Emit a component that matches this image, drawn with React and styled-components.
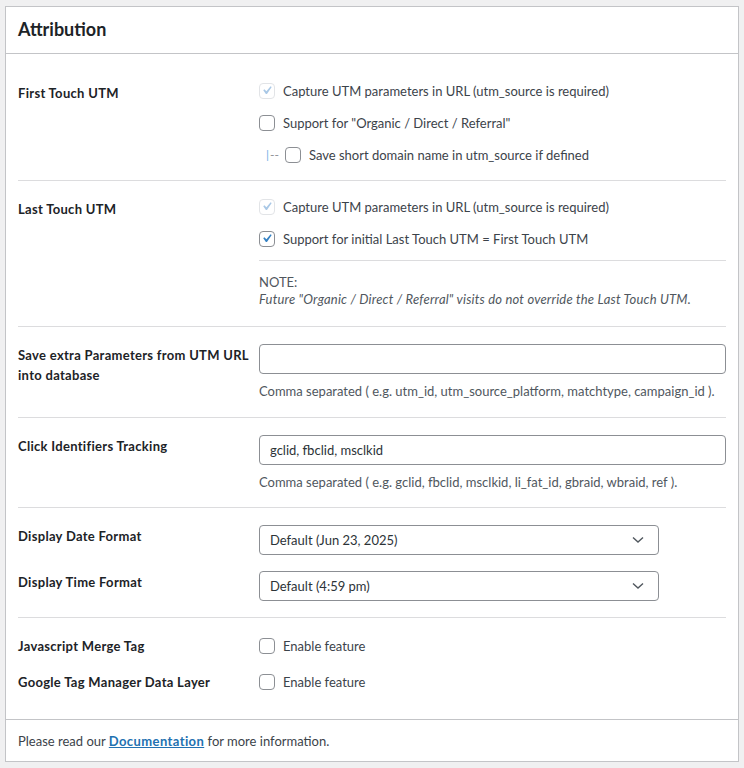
import React from "react";
import styled, { createGlobalStyle } from "styled-components";

const GlobalStyle = createGlobalStyle`
  html, body {
    margin: 0;
    padding: 0;
    background: #f0f0f1;
  }
  body {
    padding: 6px 5px 0;
    font-family: "Lato", "Noto Sans", sans-serif;
    font-size: 13px;
    color: #3c434a;
  }
`;

const Panel = styled.div`
  background: #fff;
  border: 1px solid #c3c4c7;
`;

const Header = styled.div`
  padding: 10px 12px 12px;
  border-bottom: 1px solid #c3c4c7;
`;

const Title = styled.h2`
  margin: 0;
  font-size: 18px;
  line-height: 24px;
  font-weight: 700;
  color: #1d2327;
`;

const Body = styled.div`
  padding: 0 12px;
`;

const Section = styled.div`
  display: flex;
  flex-direction: column;
  gap: ${(p) => p.$gap || 0}px;
  padding: ${(p) => p.$top}px 0 ${(p) => p.$bottom}px;
  border-bottom: ${(p) => (p.$last ? "none" : "1px solid #dcdcde")};
`;

const Field = styled.div`
  display: grid;
  grid-template-columns: 241px 1fr;
  align-items: start;
`;

const Label = styled.div`
  padding-right: 8px;
  margin-top: ${(p) => p.$offset || 0}px;
  font-weight: 700;
  font-size: 13px;
  line-height: 20px;
  letter-spacing: 0.3px;
  color: #1d2327;
`;

const Control = styled.div`
  display: flex;
  flex-direction: column;
  gap: ${(p) => p.$gap || 0}px;
`;

const Item = styled.label`
  display: flex;
  align-items: center;
  gap: 8px;
  height: ${(p) => p.$height || 32}px;
  padding-left: ${(p) => (p.$nested ? 7 : 0)}px;
  line-height: 20px;
  color: #3c434a;
`;

const Box = styled.span`
  flex: none;
  width: 16px;
  height: 16px;
  box-sizing: border-box;
  border: 1px solid ${(p) => (p.$disabled ? "#e2e4e7" : "#8c8f94")};
  border-radius: 4px;
  background: #fff;
  display: flex;
  align-items: center;
  justify-content: center;
  overflow: visible;

  svg {
    width: 19px;
    height: 19px;
    margin: -2px 0 0 1px;
    fill: ${(p) => (p.$disabled ? "#a9c8e6" : "#3582c4")};
  }
`;

const Tree = styled.span`
  display: inline-flex;
  font-size: 12px;
  color: #8c8f94;
  margin-right: -2px;

  b {
    font-weight: 400;
    color: #72aee6;
    margin-right: 1px;
  }
`;

const Divider = styled.div`
  height: 1px;
  background: #dcdcde;
  margin-top: 5px;
`;

const Note = styled.div`
  margin-top: 13px;
  line-height: 17px;
  color: #50575e;

  em {
    display: block;
    letter-spacing: 0.2px;
  }
`;

const TextInput = styled.input`
  box-sizing: border-box;
  width: 100%;
  height: 30px;
  padding: 0 10px;
  border: 1px solid #8c8f94;
  border-radius: 4px;
  font-family: inherit;
  font-size: 13px;
  color: #2c3338;
  background: #fff;
  outline: none;
`;

const Description = styled.p`
  margin: 8px 0 0;
  line-height: 18px;
  color: #50575e;
`;

const Select = styled.div`
  box-sizing: border-box;
  width: 400px;
  height: 30px;
  padding: 0 14px 0 10px;
  border: 1px solid #8c8f94;
  border-radius: 4px;
  display: flex;
  align-items: center;
  justify-content: space-between;
  color: #2c3338;
  line-height: 20px;

  svg {
    width: 12px;
    height: 8px;
  }
`;

const Footer = styled.div`
  padding: 12px 12px 11px;
  border-top: 1px solid #c3c4c7;
  line-height: 18px;
  color: #3c434a;
`;

const Link = styled.a`
  color: #2271b1;
  font-weight: 700;
  letter-spacing: 0.4px;
  text-decoration: underline;
`;

const Check = ({ checked, disabled }) => (
  <Box $disabled={disabled}>
    {checked && (
      <svg viewBox="3 2 16 16">
        <path d="M14.83 4.89l1.34.94-5.81 8.38H9.02L5.78 9.67l1.34-1.25 2.57 2.4z" />
      </svg>
    )}
  </Box>
);

const Chevron = () => (
  <svg viewBox="0 0 12 8">
    <polyline points="1,1.5 6,6 11,1.5" fill="none" stroke="#50575e" strokeWidth="1.4" />
  </svg>
);

const App = () => {
  return (
    <>
      <GlobalStyle />
      <Panel>
        <Header>
          <Title>Attribution</Title>
        </Header>
        <Body>
          <Section $top={21} $bottom={9}>
            <Field>
              <Label $offset={8}>First Touch UTM</Label>
              <Control>
                <Item>
                  <Check checked disabled />
                  Capture UTM parameters in URL (utm_source is required)
                </Item>
                <Item>
                  <Check />
                  Support for "Organic / Direct / Referral"
                </Item>
                <Item $nested>
                  <Tree>
                    <b>|</b>--
                  </Tree>
                  <Check />
                  Save short domain name in utm_source if defined
                </Item>
              </Control>
            </Field>
          </Section>

          <Section $top={10} $bottom={18}>
            <Field>
              <Label $offset={8}>Last Touch UTM</Label>
              <Control>
                <Item>
                  <Check checked disabled />
                  Capture UTM parameters in URL (utm_source is required)
                </Item>
                <Item>
                  <Check checked />
                  Support for initial Last Touch UTM = First Touch UTM
                </Item>
                <Divider />
                <Note>
                  NOTE:
                  <em>Future "Organic / Direct / Referral" visits do not override the Last Touch UTM.</em>
                </Note>
              </Control>
            </Field>
          </Section>

          <Section $top={17} $bottom={17}>
            <Field>
              <Label $offset={1}>Save extra Parameters from UTM URL into database</Label>
              <Control>
                <TextInput defaultValue="" />
                <Description>
                  Comma separated ( e.g. utm_id, utm_source_platform, matchtype, campaign_id ).
                </Description>
              </Control>
            </Field>
          </Section>

          <Section $top={17} $bottom={16}>
            <Field>
              <Label $offset={1}>Click Identifiers Tracking</Label>
              <Control>
                <TextInput defaultValue="gclid, fbclid, msclkid" />
                <Description>
                  Comma separated ( e.g. gclid, fbclid, msclkid, li_fat_id, gbraid, wbraid, ref ).
                </Description>
              </Control>
            </Field>
          </Section>

          <Section $top={17} $bottom={16} $gap={16}>
            <Field>
              <Label $offset={1}>Display Date Format</Label>
              <Select>
                Default (Jun 23, 2025)
                <Chevron />
              </Select>
            </Field>
            <Field>
              <Label $offset={1}>Display Time Format</Label>
              <Select>
                Default (4:59 pm)
                <Chevron />
              </Select>
            </Field>
          </Section>

          <Section $top={17} $bottom={26} $gap={14} $last>
            <Field>
              <Label $offset={1}>Javascript Merge Tag</Label>
              <Item $height={22}>
                <Check />
                Enable feature
              </Item>
            </Field>
            <Field>
              <Label $offset={1}>Google Tag Manager Data Layer</Label>
              <Item $height={22}>
                <Check />
                Enable feature
              </Item>
            </Field>
          </Section>
        </Body>
        <Footer>
          Please read our <Link href="#">Documentation</Link> for more information.
        </Footer>
      </Panel>
    </>
  );
};

export default App;
